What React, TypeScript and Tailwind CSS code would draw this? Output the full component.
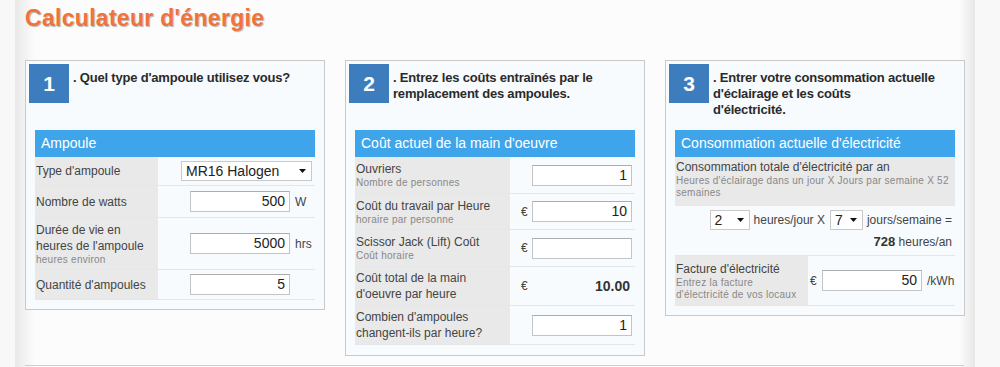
import React from "react";

const Caret = () => (
  <svg width="7" height="4" viewBox="0 0 7 4" className="shrink-0">
    <path d="M0 0 L7 0 L3.5 4 Z" fill="#111" />
  </svg>
);

const Input = ({ value, className = "" }: { value: string; className?: string }) => (
  <input
    readOnly
    defaultValue={value}
    className={
      "w-[100px] h-[21px] bg-white border border-[#c4c4c4] border-t-[#acacac] text-right pr-[4px] text-[14px] text-[#222] outline-none " +
      className
    }
  />
);

const Heading = ({ n, lines }: { n: string; lines: string[] }) => (
  <div className="h-[69px] pt-[3px] pl-[3px] flex items-start">
    <div className="w-[40px] h-[39px] bg-[#3d7dbd] text-white font-bold text-[21px] flex items-center justify-center shrink-0">
      {n}
    </div>
    <div className="ml-[4px] mt-[6px] text-[13px] leading-[16px] font-bold text-[#2a2a2a] tracking-[-0.2px]">
      {lines.map((l, i) => (
        <div key={i}>{l}</div>
      ))}
    </div>
  </div>
);

const Bar = ({ title }: { title: string }) => (
  <div className="h-[27px] bg-[#3fa5ea] text-white text-[14px] leading-[27px] pl-[6px]">{title}</div>
);

const Small = ({ children }: { children: React.ReactNode }) => (
  <div className="text-[10px] leading-[12px] text-[#888] tracking-[0.25px]">{children}</div>
);

export default function App() {
  return (
    <div className="w-[1000px] h-[367px] bg-[#f8f8f8] flex overflow-hidden font-['Liberation_Sans',Arial,sans-serif] text-[#444]">
      <div className="w-[15px] shrink-0" />
      <div className="w-[960px] h-full shrink-0 bg-[linear-gradient(to_right,#e9e9e9,#fcfcfc_20px,#fcfcfc_944px,#e7e7e7)] pl-[10px] flex flex-col">
        <div className="pt-[5px] h-[60px] text-[23px] leading-[26px] font-bold tracking-[0.3px] text-[#f0733a] [text-shadow:1px_1px_1px_#b5b5b5]">
          Calculateur d'énergie
        </div>

        <div className="flex items-start gap-[20px]">
          {/* Panel 1 */}
          <div className="w-[300px] border border-[#c9c9c9] bg-[#f7fbfe] pb-[9px]">
            <Heading n="1" lines={[". Quel type d'ampoule utilisez vous?"]} />
            <div className="px-[9px]">
              <Bar title="Ampoule" />
              <div className="flex h-[29px] border-b border-[#e3e7ea]">
                <div className="w-[123px] bg-[#e9e9e9] flex items-center pl-[1px] text-[12px]">Type d'ampoule</div>
                <div className="flex-1 flex items-center">
                  <div className="ml-[23px] w-[131px] h-[20px] bg-white border border-[#c9c9c9] flex items-center justify-between pl-[4px] pr-[5px] text-[14px] text-[#222]">
                    <span>MR16 Halogen</span>
                    <Caret />
                  </div>
                </div>
              </div>
              <div className="flex h-[32px] border-b border-[#e3e7ea]">
                <div className="w-[123px] bg-[#e9e9e9] flex items-center pl-[1px] text-[12px]">Nombre de watts</div>
                <div className="flex-1 flex items-center">
                  <Input value="500" className="ml-[32px]" />
                  <span className="ml-[5px] text-[12px]">W</span>
                </div>
              </div>
              <div className="flex h-[52px] border-b border-[#e3e7ea]">
                <div className="w-[123px] bg-[#e9e9e9] flex flex-col justify-center pl-[1px]">
                  <div className="text-[12px] leading-[16px]">Durée de vie en</div>
                  <div className="text-[12px] leading-[16px]">heures de l'ampoule</div>
                  <Small>heures environ</Small>
                </div>
                <div className="flex-1 flex items-center">
                  <Input value="5000" className="ml-[32px]" />
                  <span className="ml-[5px] text-[12px]">hrs</span>
                </div>
              </div>
              <div className="flex h-[30px] border-b border-[#e3e7ea]">
                <div className="w-[123px] bg-[#e9e9e9] flex items-center pl-[1px] text-[12px]">Quantité d'ampoules</div>
                <div className="flex-1 flex items-center">
                  <Input value="5" className="ml-[32px]" />
                </div>
              </div>
            </div>
          </div>

          {/* Panel 2 */}
          <div className="w-[300px] border border-[#c9c9c9] bg-[#f7fbfe] pb-[10px]">
            <Heading n="2" lines={[". Entrez les coûts entraînés par le", "remplacement des ampoules."]} />
            <div className="px-[9px]">
              <Bar title="Coût actuel de la main d'oeuvre" />
              <div className="flex h-[37px] border-b border-[#e3e7ea]">
                <div className="w-[155px] bg-[#e9e9e9] flex flex-col justify-center pl-[1px]">
                  <div className="text-[12px] leading-[16px]">Ouvriers</div>
                  <Small>Nombre de personnes</Small>
                </div>
                <div className="flex-1 flex items-center">
                  <span className="w-[22px]" />
                  <Input value="1" />
                </div>
              </div>
              <div className="flex h-[36px] border-b border-[#e3e7ea]">
                <div className="w-[155px] bg-[#e9e9e9] flex flex-col justify-center pl-[1px]">
                  <div className="text-[12px] leading-[16px]">Coût du travail par Heure</div>
                  <Small>horaire par personne</Small>
                </div>
                <div className="flex-1 flex items-center">
                  <span className="w-[22px] pl-[11px] text-[12px]">€</span>
                  <Input value="10" />
                </div>
              </div>
              <div className="flex h-[37px] border-b border-[#e3e7ea]">
                <div className="w-[155px] bg-[#e9e9e9] flex flex-col justify-center pl-[1px]">
                  <div className="text-[12px] leading-[16px]">Scissor Jack (Lift) Coût</div>
                  <Small>Coût horaire</Small>
                </div>
                <div className="flex-1 flex items-center">
                  <span className="w-[22px] pl-[11px] text-[12px]">€</span>
                  <Input value="" />
                </div>
              </div>
              <div className="flex h-[39px] border-b border-[#e3e7ea]">
                <div className="w-[155px] bg-[#e9e9e9] flex flex-col justify-center pl-[1px]">
                  <div className="text-[12px] leading-[16px]">Coût total de la main</div>
                  <div className="text-[12px] leading-[16px]">d'oeuvre par heure</div>
                </div>
                <div className="flex-1 flex items-center">
                  <span className="w-[22px] pl-[11px] text-[12px]">€</span>
                  <span className="flex-1 text-right pr-[5px] text-[14px] font-bold text-[#333]">10.00</span>
                </div>
              </div>
              <div className="flex h-[39px] border-b border-[#e3e7ea]">
                <div className="w-[155px] bg-[#e9e9e9] flex flex-col justify-center pl-[1px]">
                  <div className="text-[12px] leading-[16px]">Combien d'ampoules</div>
                  <div className="text-[12px] leading-[16px]">changent-ils par heure?</div>
                </div>
                <div className="flex-1 flex items-center">
                  <span className="w-[22px]" />
                  <Input value="1" />
                </div>
              </div>
            </div>
          </div>

          {/* Panel 3 */}
          <div className="w-[300px] border border-[#c9c9c9] bg-[#f7fbfe] pb-[9px]">
            <Heading
              n="3"
              lines={[". Entrer votre consommation actuelle", "d'éclairage et les coûts", "d'électricité."]}
            />
            <div className="px-[9px]">
              <Bar title="Consommation actuelle d'électricité" />
              <div className="h-[49px] bg-[#e9e9e9] pt-[2px] pl-[1px]">
                <div className="text-[12px] leading-[16px]">Consommation totale d'électricité par an</div>
                <Small>Heures d'éclairage dans un jour X Jours par semaine X 52 semaines</Small>
              </div>
              <div className="h-[50px] border-b border-[#e3e7ea] pt-[4px] pr-[3px] flex flex-col items-end">
                <div className="flex items-center h-[20px] text-[12px]">
                  <div className="w-[40px] h-[20px] bg-white border border-[#c9c9c9] flex items-center justify-between pl-[4px] pr-[5px] text-[14px] text-[#222]">
                    <span>2</span>
                    <Caret />
                  </div>
                  <span className="ml-[4px]">heures/jour X</span>
                  <div className="ml-[5px] w-[33px] h-[20px] bg-white border border-[#c9c9c9] flex items-center justify-between pl-[4px] pr-[5px] text-[14px] text-[#222]">
                    <span>7</span>
                    <Caret />
                  </div>
                  <span className="ml-[4px]">jours/semaine =</span>
                </div>
                <div className="mt-[4px] text-[12px] leading-[16px]">
                  <span className="font-bold text-[13px] text-[#333]">728</span> heures/an
                </div>
              </div>
              <div className="flex h-[50px] border-b border-[#e3e7ea]">
                <div className="w-[133px] bg-[#e9e9e9] flex flex-col justify-center pl-[1px]">
                  <div className="text-[12px] leading-[16px]">Facture d'électricité</div>
                  <Small>Entrez la facture</Small>
                  <Small>d'électricité de vos locaux</Small>
                </div>
                <div className="flex-1 flex items-center">
                  <span className="w-[14px] pl-[2px] text-[12px]">€</span>
                  <Input value="50" />
                  <span className="ml-[5px] text-[12px]">/kWh</span>
                </div>
              </div>
            </div>
          </div>
        </div>

        <div className="flex-1" />
        <div className="w-[939px] border-t border-[#cfcfcf] h-[2px]" />
      </div>
    </div>
  );
}
